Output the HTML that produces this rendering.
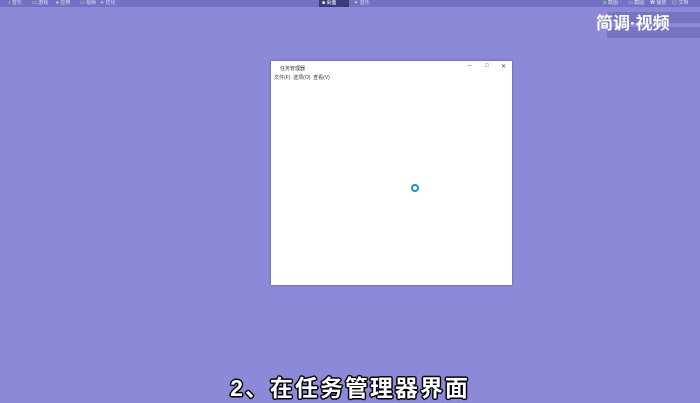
<!DOCTYPE html>
<html><head><meta charset="utf-8"><style>
body{margin:0;width:700px;height:400px;background:#8b89d8;position:relative;overflow:hidden;font-family:"Liberation Sans","Noto Sans CJK SC",sans-serif}
.top{position:absolute;left:0;top:0;width:700px;height:7px;background:#7471c4;font-size:5px;color:#dde;line-height:7px}
.top span{position:absolute}
.side{position:absolute;left:607px;top:12px;width:93px;height:11px;background:#7774c4}
.side2{position:absolute;left:607px;top:27px;width:93px;height:11px;background:#7774c4}
.logo{position:absolute;left:596px;top:9px;font-size:17px;font-weight:bold;color:#fff}
.win{position:absolute;left:271px;top:61px;width:241px;height:224px;background:#fff;box-shadow:0 0 2px rgba(40,40,90,.6)}
.title{position:absolute;left:9px;top:4px;font-size:5px;color:#333}
.menu{position:absolute;left:3px;top:13px;font-size:5px;color:#333}
.ctl{position:absolute;top:2px;font-size:6px;color:#444}
.spin{position:absolute;left:140px;top:123px;width:4px;height:4px;border:2px solid #1a8ee0;border-radius:50%}
.sub{position:absolute;left:0;width:700px;top:369px;text-align:center;font-size:23px;font-weight:bold;color:#fff;letter-spacing:2px;
text-shadow:-1.5px 0 #000,1.5px 0 #000,0 -1.5px #000,0 1.5px #000,-1px -1px #000,1px 1px #000,-1px 1px #000,1px -1px #000}
</style></head><body>
<div class="top">
<span style="left:8px">♪ 音乐</span><span style="left:32px">▭ 游戏</span><span style="left:56px">● 应用</span><span style="left:80px">▭ 视频</span><span style="left:100px">✈ 优化</span>
<span style="left:319px;width:27px;height:7px;background:#3d3a7a;color:#fff;padding-left:3px">■ 桌面</span><span style="left:354px">✦ 音乐</span>
<span style="left:603px;color:#6d6">■</span><span style="left:608px">截图 ·</span><span style="left:628px">▭ 截图</span><span style="left:650px">✿ 播放</span><span style="left:672px">◎ 文档</span>
</div>
<div class="side"></div><div class="side2"></div>
<div class="logo">简调·视频</div>
<div class="win">
<div class="title">任务管理器</div>
<div class="menu">文件(F)&nbsp; 选项(O)&nbsp; 查看(V)</div>
<div class="ctl" style="left:197px">–</div><div class="ctl" style="left:214px">□</div><div class="ctl" style="left:230px">✕</div>
<div class="spin"></div>
</div>
<div class="sub">2、在任务管理器界面</div>
</body></html>
